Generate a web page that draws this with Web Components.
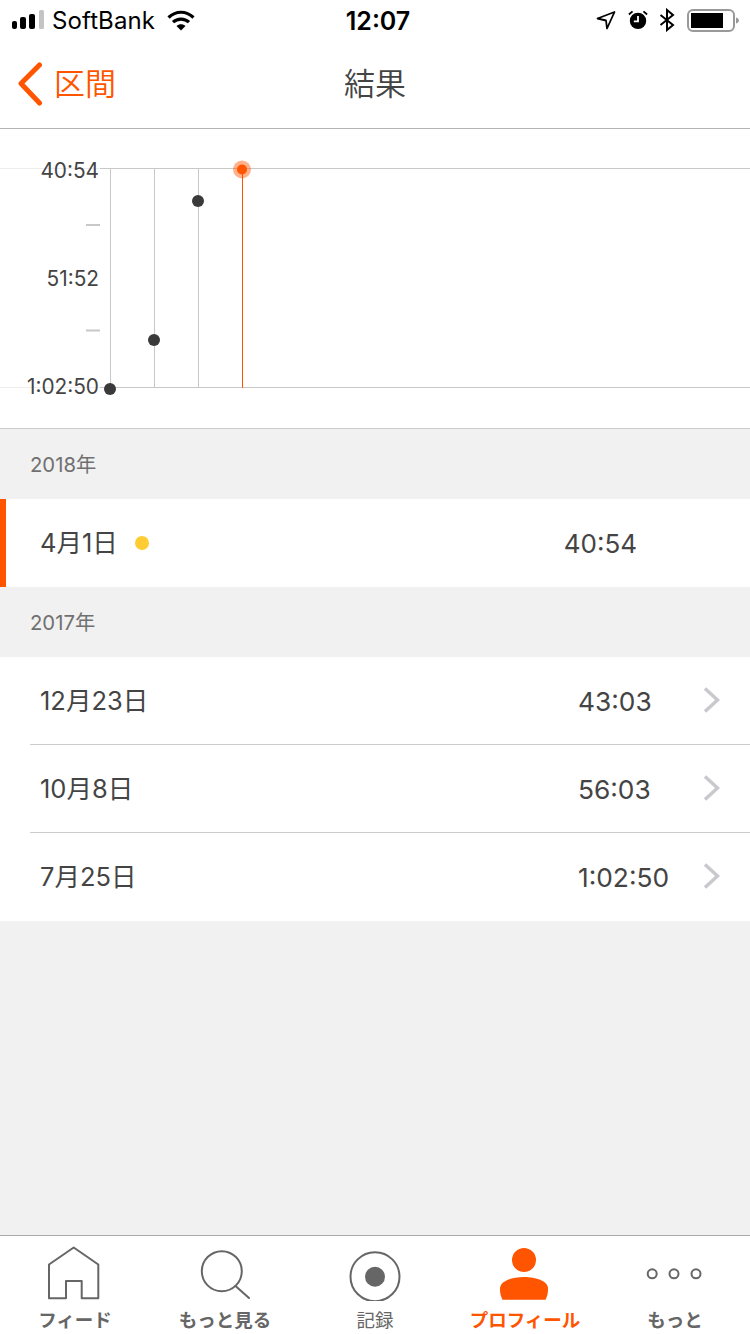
<!DOCTYPE html>
<html lang="ja">
<head>
<meta charset="utf-8">
<title>結果</title>
<style>
  html, body { margin: 0; height: 100%; }
  body { font-family: Inter, "Noto Sans CJK JP", sans-serif; background: #f1f1f1; color: #444; }
  results-app { width: 750px; height: 1334px; }
</style>
</head>
<body>
<results-app>
  <status-bar carrier="SoftBank" time="12:07"></status-bar>
  <nav-bar back="区間" heading="結果"></nav-bar>
  <result-chart></result-chart>
  <year-header>2018年</year-header>
  <result-row date="4月1日" time="40:54" current></result-row>
  <year-header>2017年</year-header>
  <result-row date="12月23日" time="43:03" divider></result-row>
  <result-row date="10月8日" time="56:03" divider></result-row>
  <result-row date="7月25日" time="1:02:50"></result-row>
  <tab-bar slot="tabs">
    <tab-item label="フィード">
      <svg viewBox="0 0 56 56" width="56" height="56" fill="none" stroke="#666" stroke-width="2" stroke-linejoin="round">
        <path d="M2 19.500 26.700 2.500 51.300 19.500V53.300H34.700V36H19V53.300H2Z"/>
      </svg>
    </tab-item>
    <tab-item label="もっと見る">
      <svg viewBox="0 0 56 56" width="56" height="56" fill="none" stroke="#666" stroke-width="2" stroke-linecap="round">
        <circle cx="24.800" cy="26.200" r="20"/><path d="M38.500 41 52 53"/>
      </svg>
    </tab-item>
    <tab-item label="記録" light>
      <svg viewBox="0 0 56 56" width="56" height="56">
        <circle cx="28" cy="31.700" r="24.500" fill="none" stroke="#666" stroke-width="2"/><circle cx="28" cy="31.700" r="10" fill="#666"/>
      </svg>
    </tab-item>
    <tab-item label="プロフィール" active>
      <svg viewBox="0 0 56 56" width="56" height="56" fill="#f50">
        <circle cx="27" cy="15" r="12"/><path d="M5.500 54.700C3 50 3 46 3 43.500 3 36 15 32 27 32S51 36 51 43.500C51 46 51 50 48.500 54.700Z"/>
      </svg>
    </tab-item>
    <tab-item label="もっと">
      <svg viewBox="0 0 60 56" width="60" height="56" fill="none" stroke="#666" stroke-width="2">
        <circle cx="7.200" cy="28.800" r="4.500"/><circle cx="29" cy="28.800" r="4.500"/><circle cx="51" cy="28.800" r="4.500"/>
      </svg>
    </tab-item>
  </tab-bar>
</results-app>

<script>
// small helper so every element below declares its markup the same way
function makeTemplate(html) {
  const template = document.createElement('template');
  template.innerHTML = html;
  return template;
}

class BaseElement extends HTMLElement {
  constructor() {
    super();
    const { template } = this.constructor;
    this.attachShadow({ mode: 'open' }).appendChild(template.content.cloneNode(true));
  }
  fill(selector, value) {
    this.shadowRoot.querySelector(selector).textContent = value;
  }
}

class ResultsApp extends BaseElement {
  static get template() {
    return makeTemplate(`
      <style>
        :host { display: flex; flex-direction: column; }
        main { flex: 1; display: flex; flex-direction: column; }
      </style>
      <main><slot></slot></main>
      <slot name="tabs"></slot>`);
  }
}

class StatusBar extends BaseElement {
  static get template() {
    return makeTemplate(`
      <style>
        :host { display: block; background: #fff; color: #000; }
        .bar { height: 40px; position: relative; display: flex; align-items: center; justify-content: space-between; padding: 0 10px 0 12px; }
        .side { display: flex; align-items: center; }
        .carrier { font-size: 24px; margin: 0 12px 0 8px; letter-spacing: .1px; }
        .time { position: absolute; left: 6px; right: 0; padding-top: 1px; text-align: center; font-size: 25px; font-weight: 600; }
        svg { display: block; }
      </style>
      <div class="bar">
        <div class="side">
          <svg width="32" height="20" viewBox="0 0 32 20">
            <rect x="0" y="11" width="5" height="8" rx="2"/><rect x="8" y="7" width="6" height="12" rx="2"/>
            <rect x="17" y="4" width="6" height="15" rx="2"/><rect x="27" y="0" width="5" height="19" rx="1.500" fill="#c4c4c4"/>
          </svg>
          <span class="carrier"></span>
          <svg width="28" height="21" viewBox="0 0 28 21" fill="none" stroke="#000" stroke-width="3.200">
            <path d="M1.500 7.500C9 .5 19 .5 26.500 7.500"/><path d="M6 12.200C10.500 8 17.500 8 22 12.200"/>
            <path d="M14 20.500 9.500 16C12 13.700 16 13.700 18.500 16Z" fill="#000" stroke="none"/>
          </svg>
        </div>
        <span class="time"></span>
        <div class="side">
          <svg width="20" height="20" viewBox="0 0 20 20"><path d="M18.500 2 1.500 8.500 10 10.500 11 18.500Z" fill="none" stroke="#000" stroke-width="1.800" stroke-linejoin="round"/></svg>
          <svg width="20" height="20" viewBox="0 0 22 22" style="margin-left:12px">
            <circle cx="11" cy="12" r="9"/><path d="M11 6.500V12.500H6.500" fill="none" stroke="#fff" stroke-width="2"/>
            <path d="M1 5 5 1.500M21 5 17 1.500" stroke="#000" stroke-width="2"/>
          </svg>
          <svg width="16" height="24" viewBox="0 0 16 24" style="margin-left:11px"><path d="M1.500 7 14 17 8 22V2L14 7 1.500 17" fill="none" stroke="#000" stroke-width="2"/></svg>
          <svg width="53" height="24" viewBox="0 0 53 24" style="margin-left:12px;margin-top:2px">
            <rect x="1" y="1" width="46" height="21" rx="5" fill="none" stroke="#999" stroke-width="2"/>
            <rect x="4" y="4" width="32" height="15" fill="#000"/>
            <path d="M49 8.500C51 9 52 10.500 52 11.500S51 14 49 14.500Z" fill="#999"/>
          </svg>
        </div>
      </div>`);
  }
  connectedCallback() {
    this.fill('.carrier', this.getAttribute('carrier'));
    this.fill('.time', this.getAttribute('time'));
  }
}

class NavBar extends BaseElement {
  static get template() {
    return makeTemplate(`
      <style>
        :host { display: block; background: #fff; border-bottom: 1px solid #b4b4b4; }
        .bar { height: 88px; position: relative; display: flex; align-items: center; padding-left: 18px; }
        .back { display: flex; align-items: center; gap: 11px; color: #f50; font-size: 31px; font-weight: 350; }
        .label { padding-bottom: 5px; }
        h1 { position: absolute; left: 0; right: 0; margin: 0; padding-bottom: 5px; text-align: center; font-size: 31px; font-weight: 350; color: #444; }
        svg { display: block; }
      </style>
      <div class="bar">
        <div class="back">
          <svg width="25" height="44" viewBox="0 0 25 44" fill="none" stroke="#f50" stroke-width="5" stroke-linecap="round" stroke-linejoin="round"><path d="M21.500 3 3 21.500 21.500 41"/></svg>
          <span class="label"></span>
        </div>
        <h1></h1>
      </div>`);
  }
  connectedCallback() {
    this.fill('.label', this.getAttribute('back'));
    this.fill('h1', this.getAttribute('heading'));
  }
}

// plot of the finish times, y axis runs from best (top) to worst (bottom)
class ResultChart extends BaseElement {
  static get template() {
    return makeTemplate(`
      <style>
        :host { display: block; background: #fff; border-bottom: 1px solid #ccc; }
        svg { display: block; }
        text { font-size: 20.800px; fill: #444; text-anchor: end; font-family: Inter, sans-serif; }
      </style>
      <svg width="750" height="299" viewBox="0 129 750 299">
        <g stroke="#eee"><path d="M0 168.500H100M0 387.500H100"/></g>
        <g stroke="#c8c8c8">
          <path d="M100 168.500H750M100 387.500H750"/>
          <path d="M110.500 168V388M154.500 168V388M198.500 168V388"/>
          <path d="M86 225H100M86 330.500H100" stroke-width="2"/>
        </g>
        <path d="M242.500 168V388" stroke="#f50"/>
        <text x="99" y="178">40:54</text>
        <text x="99" y="286">51:52</text>
        <text x="99" y="394">1:02:50</text>
        <g fill="#3a3a3a">
          <circle cx="110" cy="389" r="6"/><circle cx="154" cy="340" r="6"/><circle cx="198" cy="201" r="6"/>
        </g>
        <circle cx="242" cy="169.500" r="9" fill="#f50" fill-opacity=".45"/>
        <circle cx="242" cy="169.500" r="5" fill="#f50"/>
      </svg>`);
  }
}

class YearHeader extends BaseElement {
  static get template() {
    return makeTemplate(`
      <style>
        :host { display: flex; align-items: center; box-sizing: border-box; height: 70px; padding: 0 0 3px 30px; font-size: 20.300px; color: #707070; }
      </style>
      <slot></slot>`);
  }
}

class ResultRow extends BaseElement {
  static get template() {
    return makeTemplate(`
      <style>
        :host { display: block; background: #fff; }
        .row { height: 88px; box-sizing: border-box; display: flex; align-items: center; padding-left: 40px; }
        .date { font-size: 25.500px; width: 538px; flex: none; padding-bottom: 5px; }
        .time { font-size: 26.300px; flex: 1; }
        svg { display: block; margin: 0 30px 2px 0; }
        .mark { display: none; width: 14px; height: 14px; border-radius: 50%; background: #fc3; margin-left: 17px; }
        :host([current]) .row { border-left: 6px solid #f50; padding-left: 34px; }
        :host([current]) .date { width: auto; }
        :host([current]) .mark { display: block; }
        :host([current]) .time { flex: none; font-size: 26px; margin-left: auto; margin-right: 113px; }
        :host([current]) svg { display: none; }
        :host([divider]) .rule { margin-left: 30px; border-bottom: 1px solid #ccc; margin-top: -1px; position: relative; }
      </style>
      <div class="row">
        <span class="date"></span><i class="mark"></i><span class="time"></span>
        <svg width="17" height="26" viewBox="0 0 17 26" fill="none" stroke="#c8c8cd" stroke-width="3.500"><path d="M2 1.500 14.500 13 2 24.500"/></svg>
      </div>
      <div class="rule"></div>`);
  }
  connectedCallback() {
    this.fill('.date', this.getAttribute('date'));
    this.fill('.time', this.getAttribute('time'));
  }
}

class TabBar extends BaseElement {
  static get template() {
    return makeTemplate(`
      <style>
        :host { display: flex; height: 99px; box-sizing: border-box; background: #fff; border-top: 1px solid #aaa; }
      </style>
      <slot></slot>`);
  }
}

class TabItem extends BaseElement {
  static get template() {
    return makeTemplate(`
      <style>
        :host { flex: 1; display: flex; flex-direction: column; align-items: center; padding-top: 9px; color: #666; font-size: 18.500px; font-weight: 700; }
        :host([active]) { color: #f50; }
        :host([light]) { font-weight: 400; }
        .icon { height: 56px; display: flex; justify-content: center; }
        .label { line-height: 24px; margin-top: 7px; white-space: nowrap; }
        ::slotted(svg) { display: block; }
      </style>
      <div class="icon"><slot></slot></div>
      <span class="label"></span>`);
  }
  connectedCallback() {
    this.fill('.label', this.getAttribute('label'));
  }
}

customElements.define('results-app', ResultsApp);
customElements.define('status-bar', StatusBar);
customElements.define('nav-bar', NavBar);
customElements.define('result-chart', ResultChart);
customElements.define('year-header', YearHeader);
customElements.define('result-row', ResultRow);
customElements.define('tab-bar', TabBar);
customElements.define('tab-item', TabItem);
</script>
</body>
</html>
